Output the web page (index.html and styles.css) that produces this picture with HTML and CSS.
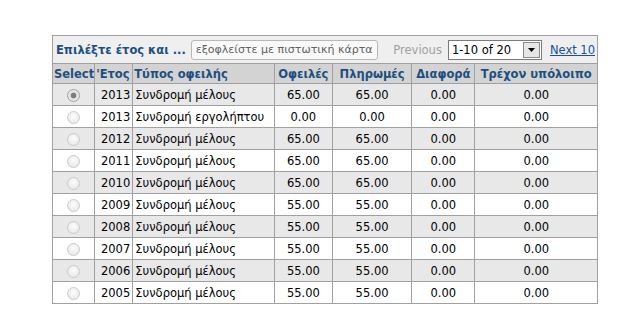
FILE: index.html
```html
<!DOCTYPE html>
<html>
<head>
<meta charset="utf-8">
<link rel="stylesheet" href="styles.css">
</head>
<body>
<div class="wrap">
<table class="grid">
<colgroup>
<col class="c1"><col class="c2"><col class="c3"><col class="c4"><col class="c5"><col class="c6"><col class="c7">
</colgroup>
<thead>
<tr class="toolbar">
<td colspan="7">
<div class="tb">
<span class="title">Επιλέξτε έτος και ...</span>
<button class="pay">εξοφλείστε με πιστωτική κάρτα</button>
<span class="spacer"></span>
<span class="prev">Previous</span>
<span class="sel"><span class="selval">1-10 of 20</span><span class="arrow"><svg width="7" height="4" viewBox="0 0 7 4"><path d="M0 0h7L3.5 4z" fill="#000"/></svg></span></span>
<a class="next" href="#">Next 10</a>
</div>
</td>
</tr>
<tr class="head">
<th>Select</th>
<th class="l">'Ετος</th>
<th class="l">Τύπος οφειλής</th>
<th>Οφειλές</th>
<th>Πληρωμές</th>
<th>Διαφορά</th>
<th>Τρέχον υπόλοιπο</th>
</tr>
</thead>
<tbody>
<tr class="alt"><td class="rad"><span class="radio on"></span></td><td class="yr">2013</td><td>Συνδρομή μέλους</td><td class="n">65.00</td><td class="n">65.00</td><td class="n">0.00</td><td class="n">0.00</td></tr>
<tr><td class="rad"><span class="radio"></span></td><td class="yr">2013</td><td>Συνδρομή εργολήπτου</td><td class="n">0.00</td><td class="n">0.00</td><td class="n">0.00</td><td class="n">0.00</td></tr>
<tr class="alt"><td class="rad"><span class="radio"></span></td><td class="yr">2012</td><td>Συνδρομή μέλους</td><td class="n">65.00</td><td class="n">65.00</td><td class="n">0.00</td><td class="n">0.00</td></tr>
<tr><td class="rad"><span class="radio"></span></td><td class="yr">2011</td><td>Συνδρομή μέλους</td><td class="n">65.00</td><td class="n">65.00</td><td class="n">0.00</td><td class="n">0.00</td></tr>
<tr class="alt"><td class="rad"><span class="radio"></span></td><td class="yr">2010</td><td>Συνδρομή μέλους</td><td class="n">65.00</td><td class="n">65.00</td><td class="n">0.00</td><td class="n">0.00</td></tr>
<tr><td class="rad"><span class="radio"></span></td><td class="yr">2009</td><td>Συνδρομή μέλους</td><td class="n">55.00</td><td class="n">55.00</td><td class="n">0.00</td><td class="n">0.00</td></tr>
<tr class="alt"><td class="rad"><span class="radio"></span></td><td class="yr">2008</td><td>Συνδρομή μέλους</td><td class="n">55.00</td><td class="n">55.00</td><td class="n">0.00</td><td class="n">0.00</td></tr>
<tr><td class="rad"><span class="radio"></span></td><td class="yr">2007</td><td>Συνδρομή μέλους</td><td class="n">55.00</td><td class="n">55.00</td><td class="n">0.00</td><td class="n">0.00</td></tr>
<tr class="alt"><td class="rad"><span class="radio"></span></td><td class="yr">2006</td><td>Συνδρομή μέλους</td><td class="n">55.00</td><td class="n">55.00</td><td class="n">0.00</td><td class="n">0.00</td></tr>
<tr><td class="rad"><span class="radio"></span></td><td class="yr">2005</td><td>Συνδρομή μέλους</td><td class="n">55.00</td><td class="n">55.00</td><td class="n">0.00</td><td class="n">0.00</td></tr>
</tbody>
</table>
</div>
</body>
</html>
```
FILE: styles.css
```css
html, body { margin: 0; padding: 0; background: #fff; }
body { font-family: "DejaVu Sans", Verdana, sans-serif; font-size: 11.5px; color: #000; }
.wrap { padding: 35px 0 0 52px; }
.grid { border-collapse: collapse; width: 546px; table-layout: fixed; border: 1px solid #a0a0a0; }
.grid td, .grid th { border: 1px solid #a0a0a0; padding: 0 2px; white-space: nowrap; overflow: hidden; }
.toolbar td { background: #efefef; height: 27px; padding: 0 2px 0 3px; }
.tb { display: flex; align-items: center; height: 27px; }
.title { font-weight: bold; color: #1c4f80; }
.pay { margin-left: 5px; height: 20px; padding: 0 4px; font-family: inherit; font-size: 11px; color: #606060; background: #f9f9f9; border: 1px solid #b8b8b8; border-radius: 3px; }
.spacer { flex: 1; }
.prev { color: #a0a0a0; margin-right: 6px; }
.sel { display: flex; align-items: center; width: 92px; height: 18px; border: 1px solid #7a7a7a; background: #fff; margin-right: 8px; }
.selval { flex: 1; padding-left: 3px; color: #000; }
.arrow { width: 15px; height: 14px; margin-right: 1px; border: 1px solid #888; background: #e6e6e6; display: flex; align-items: center; justify-content: center; }
.next { color: #1a4da3; text-decoration: underline; }
.head th { background: #d3d3d3; color: #1c4f80; font-weight: bold; height: 19px; text-align: center; padding: 0 1px; }
.head th.l { text-align: left; }
.c1 { width: 42px; }
.c2 { width: 38px; }
.c3 { width: 141px; }
.c4 { width: 58px; }
.c5 { width: 79px; }
.c6 { width: 63px; }
.c7 { width: 122px; }
.grid tbody td { height: 21px; }
.grid tbody tr { background: #fff; }
.grid tbody tr.alt { background: #e8e8e8; }
.rad { text-align: center; }
.yr { text-align: right; }
.n { text-align: center; }
.radio { display: inline-block; width: 13px; height: 13px; border-radius: 50%; border: 1px solid #cacaca; background: radial-gradient(circle at 50% 40%, #fdfdfd, #e2e2e2); vertical-align: middle; box-sizing: border-box; }
.radio.on { border-color: #a0a0a0; background: radial-gradient(circle, #7c7c7c 0 2.5px, #cfcfcf 3px, #ececec 4.5px, #d8d8d8); }
```
